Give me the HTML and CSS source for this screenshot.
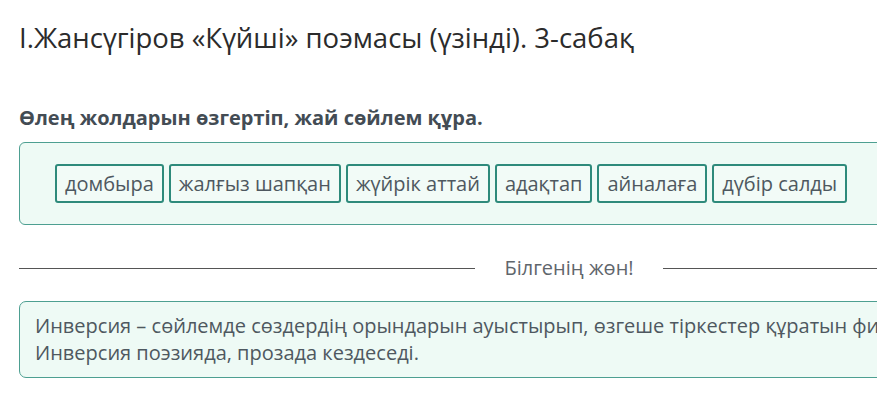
FILE: index.html
```html
<!DOCTYPE html>
<html lang="kk">
<head>
  <meta charset="UTF-8">
  <meta name="viewport" content="width=device-width, initial-scale=1.0">
  <title>Күйші</title>
  <link rel="stylesheet" href="styles.css">
</head>
<body>
  <div class="page">
    <h1 class="title">І.Жансүгіров «Күйші» поэмасы (үзінді). 3-сабақ</h1>

    <h2 class="task">Өлең жолдарын өзгертіп, жай сөйлем құра.</h2>
    <div class="word-box">
      <span class="chip">домбыра</span>
      <span class="chip">жалғыз шапқан</span>
      <span class="chip">жүйрік аттай</span>
      <span class="chip">адақтап</span>
      <span class="chip">айналаға</span>
      <span class="chip">дүбір салды</span>
    </div>

    <div class="divider">
      <span class="divider-line"></span>
      <span class="divider-text">Білгенің жөн!</span>
      <span class="divider-line"></span>
    </div>

    <div class="note">
      Инверсия – сөйлемде сөздердің орындарын ауыстырып, өзгеше тіркестер құратын фигура.<br>
      Инверсия поэзияда, прозада кездеседі.
    </div>
  </div>
</body>
</html>
```

FILE: styles.css
```css
body {
  margin: 0;
  background: #fff;
  font-family: "Open Sans", "Noto Sans", sans-serif;
  overflow: hidden;
}
.page {
  width: 1100px;
  padding: 18px 0 0 19px;
}
.title {
  font-size: 27.5px;
  font-weight: 400;
  color: #2b2b2b;
  margin: 0;
  line-height: 40px;
}
.task {
  font-size: 20px;
  font-weight: 700;
  color: #434c54;
  margin: 47px 0 0;
  line-height: 26px;
}
.word-box {
  margin-top: 11px;
  display: flex;
  gap: 5px;
  padding: 21px 35px;
  background: #eefaf5;
  border: 1px solid #4d9f91;
  border-radius: 6px;
}
.chip {
  display: inline-block;
  font-size: 20px;
  color: #4e5860;
  line-height: 35px;
  padding: 0 8px;
  border: 2px solid #2e8a7b;
  border-radius: 3px;
  background: #f2fbf7;
}
.divider {
  display: flex;
  align-items: center;
  margin-top: 30px;
}
.divider-line {
  flex: 1;
  height: 1px;
  background: #555;
}
.divider-text {
  padding: 0 29px;
  font-size: 20px;
  color: #5f666c;
  line-height: 26px;
}
.note {
  margin-top: 20px;
  padding: 10px 15px 11px;
  background: #eefaf5;
  border: 1px solid #4d9f91;
  border-radius: 7px;
  font-size: 20px;
  line-height: 27px;
  color: #4e5860;
  white-space: nowrap;
}
```
